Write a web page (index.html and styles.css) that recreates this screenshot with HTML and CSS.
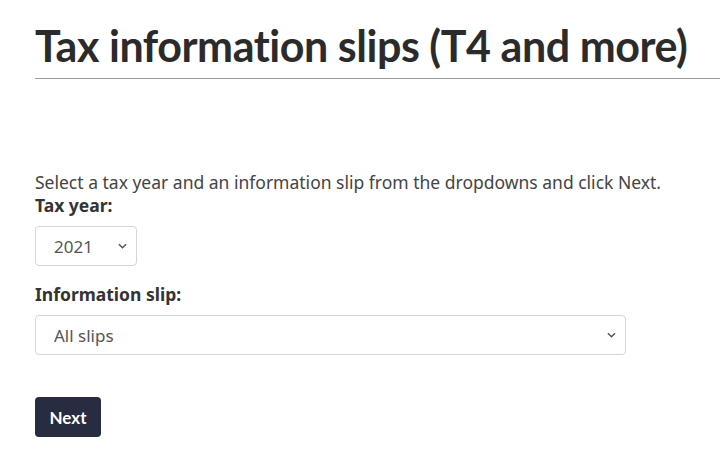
FILE: index.html
```html
<!DOCTYPE html>
<html lang="en">
<head>
<meta charset="utf-8">
<title>Tax information slips</title>
<link rel="stylesheet" href="styles.css">
</head>
<body>
<main class="page">
  <h1 class="title">Tax information slips (T4 and more)</h1>
  <form class="slip-form">
    <p class="intro">Select a tax year and an information slip from the dropdowns and click Next.</p>
    <label class="field-label" for="year">Tax year:</label>
    <div class="select-wrap select-year">
      <select id="year" class="select">
        <option>2021</option>
      </select>
      <svg class="chev" viewBox="0 0 10 6" width="9" height="6"><path d="M1 1l4 4 4-4" fill="none" stroke="#555" stroke-width="1.6"/></svg>
    </div>
    <label class="field-label field-label-2" for="slip">Information slip:</label>
    <div class="select-wrap select-slip">
      <select id="slip" class="select">
        <option>All slips</option>
      </select>
      <svg class="chev" viewBox="0 0 10 6" width="9" height="6"><path d="M1 1l4 4 4-4" fill="none" stroke="#555" stroke-width="1.6"/></svg>
    </div>
    <button type="button" class="btn-next">Next</button>
  </form>
</main>
</body>
</html>
```

FILE: styles.css
```css
html, body {
  margin: 0;
  padding: 0;
  background: #fff;
}
.page {
  padding: 20px 0 0 35px;
  font-family: "Noto Sans", "Open Sans", sans-serif;
  color: #333;
}
.title {
  font-family: Lato, sans-serif;
  font-weight: 700;
  font-size: 43px;
  letter-spacing: -0.45px;
  line-height: 52px;
  color: #2b2b2b;
  margin: 0;
  padding-bottom: 6px;
  border-bottom: 1.5px solid #9a9a9a;
}
.slip-form {
  display: flex;
  flex-direction: column;
  align-items: flex-start;
  padding-top: 92px;
}
.intro {
  margin: 0;
  font-size: 17.5px;
  line-height: 23px;
  color: #444;
}
.field-label {
  font-weight: 700;
  font-size: 17.5px;
  line-height: 23px;
  color: #333;
}
.field-label-2 {
  margin-top: 17px;
}
.select-wrap {
  position: relative;
  margin-top: 9px;
}
.select-slip {
  margin-top: 9px;
}
.select {
  appearance: none;
  -webkit-appearance: none;
  display: block;
  height: 40px;
  box-sizing: border-box;
  border: 1px solid #d6d6d6;
  border-radius: 4px;
  background: #fff;
  font-family: "Noto Sans", "Open Sans", sans-serif;
  font-size: 17px;
  color: #555;
  padding: 0 30px 0 18px;
}
.select-year .select { width: 102px; }
.select-slip .select { width: 591px; }
.chev {
  position: absolute;
  right: 10px;
  top: 17px;
  pointer-events: none;
}
.btn-next {
  margin-top: 42px;
  width: 66px;
  height: 40px;
  border: none;
  border-radius: 4px;
  background: #282c40;
  color: #fff;
  font-family: Lato, sans-serif;
  font-size: 17px;
  font-weight: 700;
  padding: 0;
}
```
